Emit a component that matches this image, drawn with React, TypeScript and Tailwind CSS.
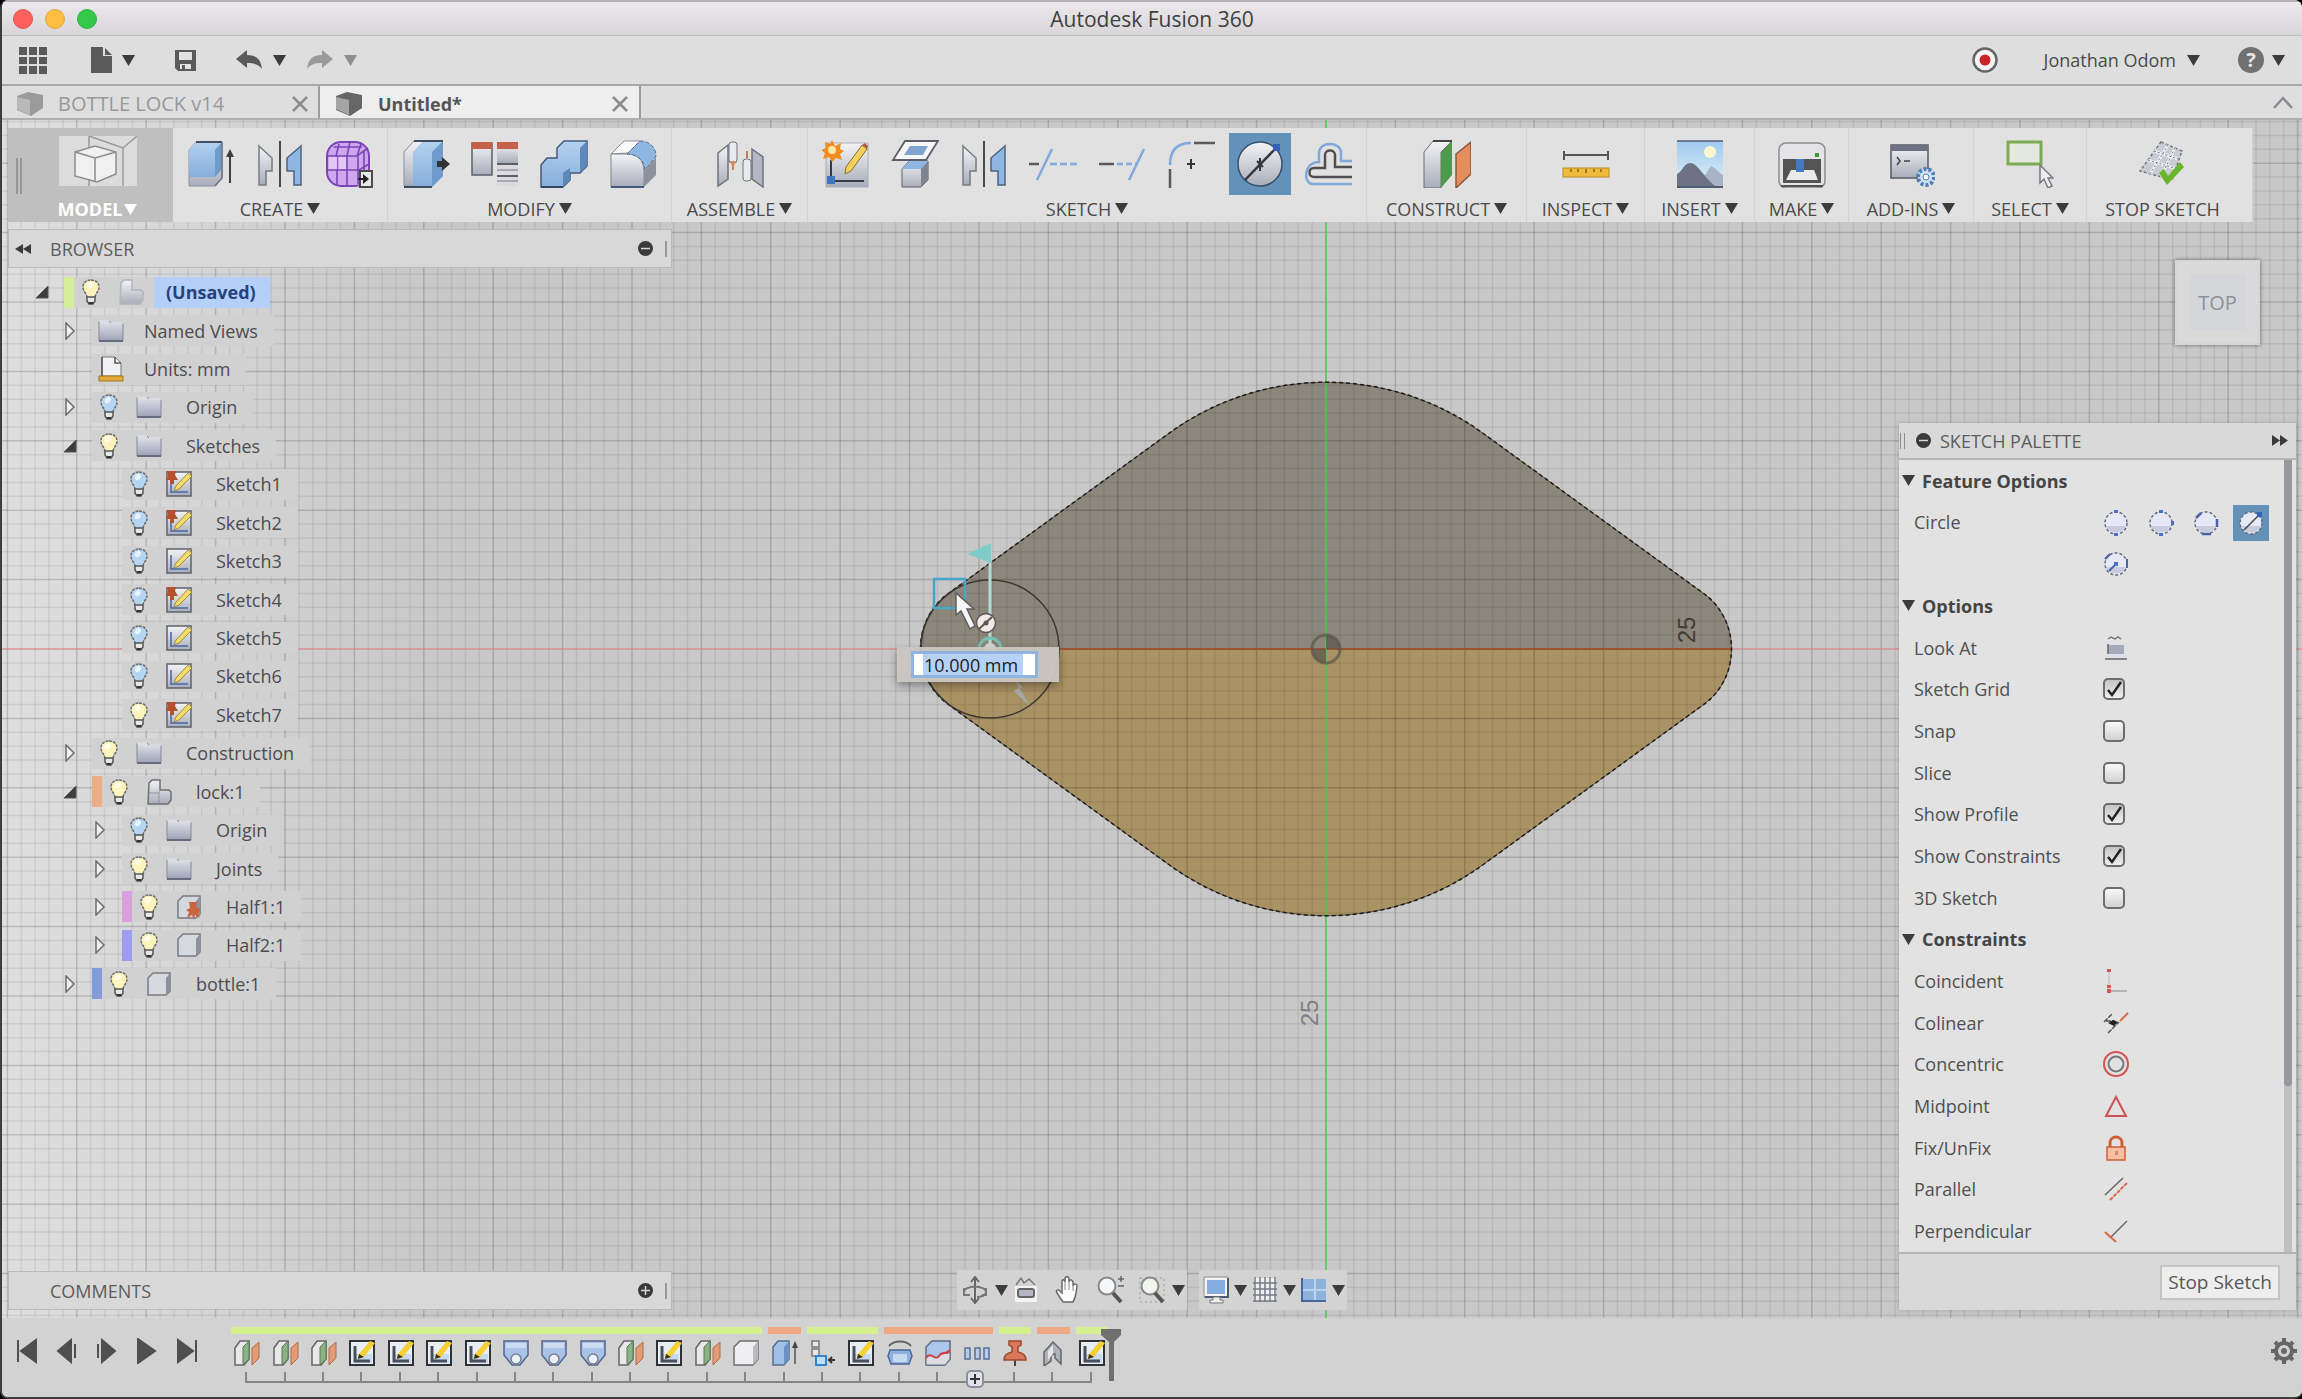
import type { ReactNode } from "react";

/* ---------- shared drawing helpers ---------- */

function Defs() {
  return (
    <svg aria-hidden="true" className="absolute size-0">
      <defs>
        <linearGradient id="blue" x1="0" y1="0" x2="0" y2="1">
          <stop offset="0" stopColor="#b4d2f0" />
          <stop offset="1" stopColor="#86aedb" />
        </linearGradient>
        <linearGradient id="steel" x1="0" y1="0" x2="0" y2="1">
          <stop offset="0" stopColor="#f4f4f7" />
          <stop offset="1" stopColor="#a9adb9" />
        </linearGradient>
        <linearGradient id="folder" x1="0" y1="0" x2="0" y2="1">
          <stop offset="0" stopColor="#e2e3ea" />
          <stop offset="1" stopColor="#9da2b6" />
        </linearGradient>
        <linearGradient id="sky" x1="0" y1="0" x2="0" y2="1">
          <stop offset="0" stopColor="#9fc9ee" />
          <stop offset="1" stopColor="#e3f1fa" />
        </linearGradient>
      </defs>
    </svg>
  );
}

function Svg({ box = "0 0 48 48", className, children }: { box?: string; className: string; children: ReactNode }) {
  return (
    <svg aria-hidden="true" viewBox={box} fill="none" className={`shrink-0 ${className}`}>
      {children}
    </svg>
  );
}

const Caret = ({ className = "text-[#3c3c3c]" }: { className?: string }) => (
  <Svg box="0 0 13 11" className={`h-[11px] w-[13px] ${className}`}>
    <path d="M0 0h13L6.500 11z" fill="currentColor" />
  </Svg>
);

/* ---------- ribbon icons (48 x 48) ---------- */

const Big = ({ children }: { children: ReactNode }) => <Svg className="size-12">{children}</Svg>;

const ExtrudeIcon = () => (
  <Big>
    <path d="M2 10l7-8h26v36l-7 8H2z" fill="url(#steel)" stroke="#8b8f9b" />
    <path d="M2 10l7-8h26v27l-7 8H2z" fill="url(#blue)" />
    <path d="M28 10l7-8v27l-7 8z" fill="#6f9bcc" />
    <path d="M9 2h26" stroke="#3f4d63" strokeWidth="2" />
    <path d="M28 46l7-8V2" stroke="#707583" strokeWidth="1.500" />
    <path d="M43 43V14" stroke="#3f3f3f" strokeWidth="2" />
    <path d="M43 9l-4 8h8z" fill="#3f3f3f" />
  </Big>
);

const MirrorIcon = () => (
  <Big>
    <path d="M3 6l13 12v13h-6v14H3z" fill="url(#steel)" stroke="#777b85" strokeWidth="1.500" />
    <path d="M45 6L31 18v13h7v14h7z" fill="#8fb6e2" stroke="#4e617c" strokeWidth="1.500" />
    <path d="M24 1v46" stroke="#4a4a4a" strokeWidth="2" />
  </Big>
);

const FormIcon = () => (
  <Big>
    <rect x="2" y="2" width="42" height="44" rx="14" fill="#cfa6f0" stroke="#7a45b3" strokeWidth="2" />
    <path d="M2 16h30l11-8M2 30h32l10-6M12 16v29M22 16v30M33 15v29M9 7h28M14 4l-3 12M25 2l-3 14M36 4l-4 12M39 10v32" stroke="#7a45b3" strokeWidth="1.600" />
    <path d="M4 17h8v12H4zM14 17h7v12h-7z" fill="#e2c8f8" />
    <rect x="35" y="31" width="12" height="16" fill="#e8e8e8" stroke="#4a4a4a" strokeWidth="2" />
    <path d="M33 39h6" stroke="#222" strokeWidth="2" />
    <path d="M38 34l6 5-6 5z" fill="#222" />
  </Big>
);

const PressPullIcon = () => (
  <Big>
    <path d="M2 12L12 1h10v36L14 46H2z" fill="url(#steel)" stroke="#8b8f9b" />
    <path d="M11 12L21 1h20v35l-11 11H11z" fill="url(#blue)" />
    <path d="M30 12L41 1v35L30 47z" fill="#6f9bcc" />
    <path d="M12 1h29M2 47h28" stroke="#3f4d63" strokeWidth="2" />
    <path d="M35 21h5v-4l8 7-8 7v-4h-5z" fill="#333" />
  </Big>
);

const PatternIcon = () => (
  <Big>
    <rect x="1" y="3" width="20" height="32" fill="url(#steel)" stroke="#5d6069" strokeWidth="1.500" />
    <rect x="1" y="2" width="20" height="7" fill="#c5614a" />
    <path d="M26 3h21v43H26z" fill="#d9d9de" />
    <path d="M26 3h21v20H26z" fill="url(#steel)" />
    <rect x="26" y="2" width="21" height="7" fill="#c5614a" />
    <path d="M26 24h21M26 36h21" stroke="#5d6069" strokeWidth="2" />
    <path d="M26 30h21M26 41h21" stroke="#a7a9b0" strokeWidth="2" />
  </Big>
);

const CombineIcon = () => (
  <Big>
    <path d="M17 8l7-7h23v25l-7 7H30v7l-7 7H1V25l6-7h10z" fill="url(#blue)" stroke="#44597a" strokeWidth="1.500" />
    <path d="M40 8l7-7v25l-7 7z" fill="#5c88bd" />
    <path d="M23 33l7-5v12l-7 7z" fill="#5c88bd" />
    <path d="M1 47h22" stroke="#34455f" strokeWidth="2" />
  </Big>
);

const FilletIcon = () => (
  <Big>
    <path d="M2 14L15 1h16l-12 12z" fill="#fafafa" stroke="#8b8f9b" />
    <path d="M2 14h16c10 0 17 6 17 17v16H2z" fill="url(#steel)" stroke="#7f838f" />
    <path d="M18 14L31 1c9 0 16 6 16 15L36 30c-1-10-8-16-18-16z" fill="#8fb6e2" stroke="#4e6788" strokeDasharray="4 2" />
    <path d="M35 31l12-14v18L35 47z" fill="#8d919d" />
    <path d="M2 47h33" stroke="#44597a" strokeWidth="2" />
  </Big>
);

const AssembleIcon = () => (
  <Big>
    <path d="M2 13l10-8v34L2 46z" fill="url(#steel)" stroke="#6f737e" strokeWidth="1.500" />
    <rect x="13" y="2" width="8" height="21" rx="3" fill="#e9eaee" stroke="#6f737e" />
    <path d="M36 9l11 8v30l-11-8z" fill="#b4b7c2" stroke="#6f737e" strokeWidth="1.500" />
    <rect x="27" y="19" width="8" height="22" rx="3" fill="#e9eaee" stroke="#6f737e" />
    <path d="M17 22v8M31 11v7" stroke="#c77b55" strokeWidth="2" />
    <path d="M14 21h6l-3 7z" fill="#d9895f" />
  </Big>
);

const NewSketchIcon = () => (
  <Big>
    <rect x="4" y="3" width="42" height="44" fill="url(#steel)" stroke="#a9acb6" />
    <path d="M9 20v21h33" stroke="#333a4a" strokeWidth="2" />
    <path d="M5 36h8v8H5z" fill="#3f73c4" />
    <path d="M24 27L40 5l5 4-16 22-6 3z" fill="#f2d25c" stroke="#8a6d2a" />
    <path d="M40 5l5 4 1-3-3-3z" fill="#a9613c" />
    <path d="M10 0l3 6 6-3-1 6 4 2-4 3 2 6-6-2-4 4-3-5-6 2 2-6-4-3 5-2-1-6 5 2z" fill="#f28c1e" />
    <circle cx="10" cy="10" r="4" fill="#ffe9a8" />
  </Big>
);

const ProjectIcon = () => (
  <Big>
    <path d="M14 1h33L35 20H2z" fill="#f6f6f8" stroke="#5b5f69" strokeWidth="1.800" />
    <path d="M19 6h18l-5 9H13z" fill="#7fa4cf" />
    <path d="M11 29l7-8h19v19l-7 7H11z" fill="url(#steel)" stroke="#5b5f69" />
    <path d="M11 29l7-8h19l-7 8z" fill="#8fb6e2" />
    <path d="M30 29l7-8v19l-7 7z" fill="#80848f" />
  </Big>
);

const TrimIcon = () => (
  <Big>
    <path d="M0 24h10" stroke="#5a5a5a" strokeWidth="2.500" />
    <path d="M8 40L23 9" stroke="#7fa8dc" strokeWidth="2.500" />
    <path d="M21 24h27" stroke="#7fa8dc" strokeWidth="2.500" strokeDasharray="7 3" />
  </Big>
);

const ExtendIcon = () => (
  <Big>
    <path d="M1 24h15" stroke="#5a5a5a" strokeWidth="2.500" />
    <path d="M31 40L46 9" stroke="#7fa8dc" strokeWidth="2.500" />
    <path d="M19 24h19" stroke="#7fa8dc" strokeWidth="2.500" strokeDasharray="6 3" />
  </Big>
);

const SketchFilletIcon = () => (
  <Big>
    <path d="M3 25C3 10 10 3 24 3" stroke="#7fa8dc" strokeWidth="2.500" />
    <path d="M27 3h21M3 29v20" stroke="#5a5a5a" strokeWidth="2.500" />
    <path d="M24 19v10M20 24h8" stroke="#333" strokeWidth="2" />
  </Big>
);

const DiameterCircleIcon = () => (
  <Big>
    <circle cx="24" cy="24" r="22" fill="url(#steel)" stroke="#37506c" strokeWidth="1.500" />
    <path d="M9 40L40 8" stroke="#33373f" strokeWidth="2.500" />
    <path d="M24 18v13M21 21l6 6" stroke="#33373f" strokeWidth="2" />
    <path d="M37 4h7v7h-7z" fill="#2f62b8" />
  </Big>
);

const OffsetIcon = () => (
  <Big>
    <path d="M47 21H36V13c0-12-22-12-22 0v9C-2 22-2 44 8 44h39" stroke="#7fa8dc" strokeWidth="2.500" />
    <path d="M47 27H30V15c0-6-10-6-10 0v13H9c-6 0-6 9 0 9h38" stroke="#4f4f4f" strokeWidth="2.500" />
  </Big>
);

const ConstructIcon = () => (
  <Big>
    <path d="M1 12L10 1h19L18 12v36H1z" fill="url(#steel)" stroke="#6a6e78" />
    <path d="M18 12L29 1v34L18 48z" fill="#4f9a4a" />
    <path d="M10 1h19" stroke="#444" strokeWidth="2" />
    <path d="M33 14L48 2v32L33 48z" fill="#e58e5d" stroke="#8a5a3e" strokeWidth="1.500" />
  </Big>
);

const InspectIcon = () => (
  <Big>
    <path d="M2 15h44M2 11v9M46 11v9" stroke="#555" strokeWidth="2" />
    <rect x="1" y="28" width="46" height="9" fill="#f0bb3c" stroke="#b98a25" />
    <path d="M9 29v3M16 29v3M24 29v4M32 29v3M39 29v3" stroke="#8a6414" strokeWidth="1.500" />
  </Big>
);

const InsertIcon = () => (
  <Big>
    <rect x="1" y="1" width="46" height="46" fill="url(#sky)" />
    <circle cx="34" cy="12" r="6" fill="#fdf6cf" />
    <path d="M1 35c5-2 7-12 14-12 6 0 9 10 14 12l6-9c5 2 8 7 12 9v12H1z" fill="#a8b4c6" />
    <path d="M1 34c5-2 7-11 13-11 8 0 16 18 27 24H1z" fill="#6d7385" />
    <path d="M1 1h46" stroke="#4f5d72" strokeWidth="1.500" />
    <path d="M1 47h46" stroke="#4f5d72" strokeWidth="2" />
  </Big>
);

const MakeIcon = () => (
  <Big>
    <rect x="1" y="3" width="46" height="45" rx="7" fill="#e4e4e6" stroke="#8c8c8c" strokeWidth="1.500" />
    <rect x="5" y="19" width="38" height="24" fill="#555" />
    <path d="M13 30h23l4 10H8z" fill="#e9e9ec" />
    <rect x="18" y="19" width="8" height="13" fill="#4479c4" />
    <path d="M37 13h4v4h-4z" fill="#3a9a3a" />
    <path d="M3 46h42" stroke="#555" strokeWidth="2" />
  </Big>
);

const AddInsIcon = () => (
  <Big>
    <rect x="4" y="5" width="37" height="33" fill="url(#steel)" stroke="#555a66" strokeWidth="1.500" />
    <path d="M4 5h37v6H4z" fill="#6c7283" />
    <path d="M10 17l3 4-3 4M17 21h6" stroke="#444" strokeWidth="1.500" />
    <circle cx="39" cy="37" r="8" fill="#cfe2f7" stroke="#4f7fb9" strokeWidth="4" strokeDasharray="3 2" />
    <circle cx="39" cy="37" r="3" fill="#fff" stroke="#4f7fb9" />
  </Big>
);

const SelectIcon = () => (
  <Big>
    <rect x="2" y="2" width="33" height="22" fill="#e4e8df" stroke="#7cab52" strokeWidth="3" />
    <path d="M34 25v18l4-4 4 9 4-2-4-8h5z" fill="#eee" stroke="#77797f" strokeWidth="1.500" />
  </Big>
);

const StopSketchIcon = () => (
  <Big>
    <path d="M22 2l21 9-10 29L1 31z" fill="#c9ccd6" stroke="#73777f" strokeWidth="1.500" strokeDasharray="3 2" />
    <path d="M15 11l24 8M9 20l26 8M29 5L11 34M36 8L22 37" stroke="#f3f3f5" strokeWidth="2.500" />
    <path d="M15 11l24 8M9 20l26 8M29 5L11 34M36 8L22 37" stroke="#73777f" strokeDasharray="2 2" />
    <path d="M20 33l5-4 4 7 12-14 4 5-17 18z" fill="#6bb52b" />
  </Big>
);

const ModelIcon = () => (
  <Svg box="0 0 78 50" className="h-[50px] w-[78px]">
    <path d="M0 0h78v50H0z" fill="#dcdcdc" />
    <path d="M30 0v50M30 0l34 12 14-12M64 12v38" stroke="#9a9a9a" strokeWidth="1.500" />
    <path d="M16 16l20-6 21 6v22l-19 8-22-6z" fill="#f0f0f0" stroke="#8d8d8d" strokeWidth="1.500" />
    <path d="M16 16l20 6 21-6M36 22v24" stroke="#8d8d8d" strokeWidth="1.500" />
  </Svg>
);

/* ---------- ribbon ---------- */

type Tool = { name: string; icon: ReactNode; on?: boolean };
type Group = { label: string; width: string; tools: Tool[]; menu?: boolean };

const groups: Group[] = [
  { label: "CREATE", width: "w-[215px]", menu: true, tools: [
    { name: "Extrude", icon: <ExtrudeIcon /> },
    { name: "Mirror", icon: <MirrorIcon /> },
    { name: "Create Form", icon: <FormIcon /> },
  ] },
  { label: "MODIFY", width: "w-[284px]", menu: true, tools: [
    { name: "Press Pull", icon: <PressPullIcon /> },
    { name: "Align", icon: <PatternIcon /> },
    { name: "Combine", icon: <CombineIcon /> },
    { name: "Fillet", icon: <FilletIcon /> },
  ] },
  { label: "ASSEMBLE", width: "w-[136px]", menu: true, tools: [{ name: "Joint", icon: <AssembleIcon /> }] },
  { label: "SKETCH", width: "w-[559px]", menu: true, tools: [
    { name: "Create Sketch", icon: <NewSketchIcon /> },
    { name: "Project", icon: <ProjectIcon /> },
    { name: "Mirror Sketch", icon: <MirrorIcon /> },
    { name: "Trim", icon: <TrimIcon /> },
    { name: "Extend", icon: <ExtendIcon /> },
    { name: "Sketch Fillet", icon: <SketchFilletIcon /> },
    { name: "Diameter Circle", icon: <DiameterCircleIcon />, on: true },
    { name: "Offset", icon: <OffsetIcon /> },
  ] },
  { label: "CONSTRUCT", width: "w-[160px]", menu: true, tools: [{ name: "Offset Plane", icon: <ConstructIcon /> }] },
  { label: "INSPECT", width: "w-[118px]", menu: true, tools: [{ name: "Measure", icon: <InspectIcon /> }] },
  { label: "INSERT", width: "w-[110px]", menu: true, tools: [{ name: "Attach Canvas", icon: <InsertIcon /> }] },
  { label: "MAKE", width: "w-[94px]", menu: true, tools: [{ name: "3D Print", icon: <MakeIcon /> }] },
  { label: "ADD-INS", width: "w-[125px]", menu: true, tools: [{ name: "Scripts", icon: <AddInsIcon /> }] },
  { label: "SELECT", width: "w-[113px]", menu: true, tools: [{ name: "Window Select", icon: <SelectIcon /> }] },
  { label: "STOP SKETCH", width: "w-[166px] pr-[14px]", tools: [{ name: "Finish Sketch", icon: <StopSketchIcon /> }] },
];

function Ribbon() {
  return (
    <div className="flex h-[94px] self-start bg-[#e1e1e1]">
      <button type="button" className="relative flex w-[165px] flex-col items-center bg-[#bfbfbf] pl-[14px] pt-2 font-bold text-white">
        <span className="absolute left-2 top-[30px] h-9 w-[6px] border-x-2 border-[#969696]" />
        <ModelIcon />
        <span className="flex h-9 items-center gap-[2px] pt-[10px]">MODEL <Caret className="text-white" /></span>
      </button>
      {groups.map((g) => (
        <div key={g.label} className={`flex flex-col items-center border-r border-[#d3d3d3] pt-[5px] ${g.width}`}>
          <div className="flex gap-[7px]">
            {g.tools.map((t) => (
              <button key={t.name} type="button" aria-label={t.name} aria-pressed={t.on}
                className={`flex size-[62px] items-center justify-center ${t.on ? "bg-[#6491b7]" : ""}`}>
                {t.icon}
              </button>
            ))}
          </div>
          <button type="button" className="flex h-[27px] items-center gap-1 whitespace-nowrap">
            {g.label}{g.menu && <Caret />}
          </button>
        </div>
      ))}
    </div>
  );
}

/* ---------- window bars ---------- */

function TitleBar() {
  return (
    <header className="relative flex h-9 items-center justify-center border-b border-t-2 border-b-[#bdbabd] border-t-[#b4b2b4] bg-linear-to-b from-[#ece9ec] to-[#d9d6d9]">
      <div className="absolute left-[11px] flex gap-3">
        <button type="button" aria-label="Close" className="size-5 rounded-full border border-[#e2544f] bg-[#fc615d]" />
        <button type="button" aria-label="Minimize" className="size-5 rounded-full border border-[#e0a83c] bg-[#fdbe41]" />
        <button type="button" aria-label="Zoom" className="size-5 rounded-full border border-[#2fb344] bg-[#34c84a]" />
      </div>
      <h1 className="text-[21px] text-[#404040]">Autodesk Fusion 360</h1>
    </header>
  );
}

function QuickBar() {
  return (
    <div className="flex h-[50px] items-center border-b-2 border-[#a8a8a8] bg-[#dedede] px-[17px] text-[#5a5a5a]">
      <button type="button" aria-label="Data panel">
        <Svg box="0 0 28 28" className="size-7">
          <path d="M0 1h8v8H0zM10 1h8v8h-8zM20 1h8v8h-8zM0 11h8v7H0zM10 11h8v7h-8zM20 11h8v7h-8zM0 20h8v8H0zM10 20h8v8h-8zM20 20h8v8h-8z" fill="currentColor" />
        </Svg>
      </button>
      <button type="button" aria-label="File" className="ml-11 flex items-center gap-[10px]">
        <Svg box="0 0 21 26" className="h-[26px] w-[21px]">
          <path d="M0 0h12v9h9v17H0z" fill="currentColor" />
          <path d="M14 1l7 7h-7z" fill="currentColor" />
        </Svg>
        <Caret />
      </button>
      <button type="button" aria-label="Save" className="ml-10">
        <Svg box="0 0 21 21" className="size-[21px]">
          <path d="M0 0h21v21H3l-3-3z" fill="currentColor" />
          <path d="M4 2h13v8H4zM5 14h11v5H5z" fill="#e2e2e2" />
          <path d="M7 15h3v4H7z" fill="currentColor" />
        </Svg>
      </button>
      <button type="button" aria-label="Undo" className="ml-10 flex items-center gap-[11px]">
        <Svg box="0 0 26 20" className="h-5 w-[26px]">
          <path d="M0 9L11 0v5c9 0 14 4 15 14-4-5-8-6-15-6v5z" fill="currentColor" />
        </Svg>
        <Caret />
      </button>
      <button type="button" aria-label="Redo" className="ml-[21px] flex items-center gap-[11px] text-[#9a9a9a]">
        <Svg box="0 0 26 20" className="h-5 w-[26px]">
          <path d="M26 9L15 0v5C6 5 1 9 0 19c4-5 8-6 15-6v5z" fill="currentColor" />
        </Svg>
        <Caret className="text-[#8f8f8f]" />
      </button>
      <button type="button" aria-label="Record" className="ml-auto">
        <Svg box="0 0 26 26" className="size-[26px]">
          <circle cx="13" cy="13" r="11.500" fill="#f4f4f4" stroke="#666" strokeWidth="2.500" />
          <circle cx="13" cy="13" r="5.500" fill="#cb2427" />
        </Svg>
      </button>
      <button type="button" className="ml-[46px] flex items-center gap-[11px] text-[#4c4c4c]">Jonathan Odom <Caret /></button>
      <button type="button" aria-label="Help" className="ml-[38px] flex items-center gap-2">
        <span className="flex size-[26px] items-center justify-center rounded-full bg-[#717171] text-xl font-bold text-[#e6e6e6]">?</span>
        <Caret />
      </button>
    </div>
  );
}

const TabCube = ({ front, side }: { front: string; side: string }) => (
  <Svg box="0 0 26 24" className="h-6 w-[26px]">
    <path d="M0 4l11-4 15 3v13l-12 8L0 18z" fill={side} />
    <path d="M0 5l13 3v15L0 17z" fill={front} />
  </Svg>
);

const Cross = () => (
  <Svg box="0 0 16 16" className="size-4"><path d="M1 1l14 14M15 1L1 15" stroke="#8b8b93" strokeWidth="2.500" /></Svg>
);

function Tabs() {
  return (
    <nav className="flex h-[34px] items-stretch border-b-2 border-[#b0b0b0] bg-[#dedede]">
      <div className="flex w-[318px] items-center border-r-2 border-[#9d9d9d] pl-[15px] pr-[10px] pt-[3px] text-[#999]">
        <TabCube front="#b9b9b9" side="#9b9b9b" />
        <a href="#bottle" className="ml-[15px] mr-auto text-xl leading-6">BOTTLE LOCK v14</a>
        <button type="button" aria-label="Close BOTTLE LOCK v14"><Cross /></button>
      </div>
      <div className="flex w-[321px] items-center border-r-2 border-[#9d9d9d] bg-[#eee] pl-4 pr-[11px] pt-[3px] font-bold text-[#555]">
        <TabCube front="#a5a5a5" side="#666" />
        <a href="#untitled" className="ml-4 mr-auto">Untitled*</a>
        <button type="button" aria-label="Close Untitled"><Cross /></button>
      </div>
      <button type="button" aria-label="Collapse" className="ml-auto mr-[9px]">
        <Svg box="0 0 20 13" className="h-[13px] w-5"><path d="M1 12l9-10 9 10" stroke="#8b8b93" strokeWidth="2.500" /></Svg>
      </button>
    </nav>
  );
}

/* ---------- browser tree ---------- */

const Bulb = ({ lit }: { lit?: boolean }) => (
  <Svg box="0 0 18 26" className="h-[26px] w-[18px]">
    <path d="M9 1c5 0 8 3 8 7 0 5-4 6-4 11H5c0-5-4-6-4-11 0-4 3-7 8-7z" fill={lit ? "#fdf3bd" : "#b5d5f3"} stroke="#6f6f6f" strokeWidth="1.500" strokeDasharray="3 1" />
    <path d="M6 4c2-2 5-1 5 1 0 3-3 5-5 4-2-1-2-3 0-5z" fill="#fff" fillOpacity=".7" />
    <path d="M5 18h8v4l-2 3H7l-2-3z" fill="#e8e8e8" stroke="#555" strokeWidth="1.500" />
    <path d="M7 24h4" stroke="#333" strokeWidth="2" />
  </Svg>
);

const Small = ({ children }: { children: ReactNode }) => <Svg box="0 0 26 26" className="size-[26px]">{children}</Svg>;

const FolderIcon = () => (
  <Small>
    <path d="M1 3h10l2 2h12v18H1z" fill="url(#folder)" stroke="#85899a" />
    <path d="M1 3h10M13 5h12" stroke="#e9e9ee" strokeWidth="1.500" />
    <path d="M1 23h24" stroke="#666b80" strokeWidth="2" />
  </Small>
);

const UnitsIcon = () => (
  <Small>
    <path d="M4 1h13l6 6v13H4z" fill="#f2f2f5" stroke="#777" />
    <path d="M4 1v19M17 1v6h6" stroke="#555" strokeWidth="1.500" />
    <path d="M1 20h24v5H1z" fill="#e3a93a" stroke="#a57420" />
  </Small>
);

const SketchIcon = ({ pinned }: { pinned?: boolean }) => (
  <Small>
    <path d="M1 1h24v24H1z" fill="url(#steel)" stroke="#5d616b" strokeWidth="1.500" />
    <path d="M5 7v14h17" stroke="#4468a5" strokeWidth="1.500" />
    <path d="M10 15L22 2l4 3-13 13-5 2z" fill="#f4dc6a" stroke="#a58a3a" />
    {pinned && <path d="M1 0h9L9 4l3 5H8v4H4V9H0l2-5z" fill="#b4502c" />}
  </Small>
);

const ComponentIcon = ({ pale }: { pale?: boolean }) => (
  <Small>
    <path d="M3 4l3-3h8v10h9l2 2v8l-3 4H2z" fill="url(#steel)" stroke={pale ? "#b3b5bd" : "#6c707b"} strokeWidth="1.500" />
    {!pale && <path d="M13 12v13M3 14h10" stroke="#8e929e" />}
  </Small>
);

const BodyIcon = ({ pinned }: { pinned?: boolean }) => (
  <Small>
    <path d="M2 7l5-5h17v18l-4 4H2z" fill="#d6d8e0" stroke="#777b86" strokeWidth="1.500" />
    <path d="M20 7l4-5v18l-4 4z" fill="#8d919d" />
    {pinned && <path d="M13 8h8l-1 5 5 3-3 3 2 5-5-3-1 5-2-5-5 3 2-6-3-2 4-2z" fill="#c8653f" />}
  </Small>
);

type Row = {
  label: string; level: 0 | 1 | 2; toggle?: "open" | "closed"; bar?: string; lit?: boolean; bulb?: boolean; icon: ReactNode; root?: boolean;
};

const rows: Row[] = [
  { label: "(Unsaved)", level: 0, toggle: "open", bar: "bg-[#d5ee9a]", bulb: true, lit: true, icon: <ComponentIcon pale />, root: true },
  { label: "Named Views", level: 1, toggle: "closed", icon: <FolderIcon /> },
  { label: "Units: mm", level: 1, icon: <UnitsIcon /> },
  { label: "Origin", level: 1, toggle: "closed", bulb: true, icon: <FolderIcon /> },
  { label: "Sketches", level: 1, toggle: "open", bulb: true, lit: true, icon: <FolderIcon /> },
  { label: "Sketch1", level: 2, bulb: true, icon: <SketchIcon pinned /> },
  { label: "Sketch2", level: 2, bulb: true, icon: <SketchIcon pinned /> },
  { label: "Sketch3", level: 2, bulb: true, icon: <SketchIcon /> },
  { label: "Sketch4", level: 2, bulb: true, icon: <SketchIcon pinned /> },
  { label: "Sketch5", level: 2, bulb: true, icon: <SketchIcon /> },
  { label: "Sketch6", level: 2, bulb: true, icon: <SketchIcon /> },
  { label: "Sketch7", level: 2, bulb: true, lit: true, icon: <SketchIcon pinned /> },
  { label: "Construction", level: 1, toggle: "closed", bulb: true, lit: true, icon: <FolderIcon /> },
  { label: "lock:1", level: 1, toggle: "open", bar: "bg-[#ecae87]", bulb: true, lit: true, icon: <ComponentIcon /> },
  { label: "Origin", level: 2, toggle: "closed", bulb: true, icon: <FolderIcon /> },
  { label: "Joints", level: 2, toggle: "closed", bulb: true, lit: true, icon: <FolderIcon /> },
  { label: "Half1:1", level: 2, toggle: "closed", bar: "bg-[#daa0dd]", bulb: true, lit: true, icon: <BodyIcon pinned /> },
  { label: "Half2:1", level: 2, toggle: "closed", bar: "bg-[#9c9cf0]", bulb: true, lit: true, icon: <BodyIcon /> },
  { label: "bottle:1", level: 1, toggle: "closed", bar: "bg-[#829bd9]", bulb: true, lit: true, icon: <BodyIcon /> },
];

const indent = { 0: "pl-3", 1: "pl-10", 2: "pl-[70px]" };

function Tree() {
  return (
    <ul className="mt-[5px] grid h-[730px] auto-rows-fr items-center">
      {rows.map((r, i) => (
        <li key={i} className={`flex h-[31px] items-center ${indent[r.level]}`}>
          <span className="flex w-11 justify-center">
            {r.toggle && (
              <button type="button" aria-label={`Toggle ${r.label}`}>
                <Svg box="0 0 14 18" className="h-[18px] w-[14px]">
                  {r.toggle === "open"
                    ? <path d="M13 3v12H1z" fill="#3c3c3c" stroke="#555" />
                    : <path d="M3 1v16l8-8z" fill="#efefef" stroke="#6d6d6d" strokeWidth="1.500" />}
                </Svg>
              </button>
            )}
          </span>
          <span className="flex h-full items-center bg-[#d1d1d1]">
            {r.bar && <span className={`h-full w-[10px] ${r.bar}`} />}
            {r.bulb && (
              <button type="button" aria-label={`Show ${r.label}`} className="flex w-[34px] justify-center"><Bulb lit={r.lit} /></button>
            )}
            <span className={`flex justify-center ${r.bulb ? "w-[46px]" : "w-[38px]"}`}>{r.icon}</span>
            <span className={r.root
              ? "flex h-full items-center bg-[#b4d0f8] pl-3 pr-[14px] font-bold text-[#26427c]"
              : "pl-[14px] pr-4 text-[#4c4c50]"}>
              {r.label}
            </span>
          </span>
        </li>
      ))}
    </ul>
  );
}

const RoundSign = ({ plus }: { plus?: boolean }) => (
  <Svg box="0 0 15 15" className="size-[15px]">
    <circle cx="7.500" cy="7.500" r="7.500" fill="#3a3a3a" />
    <path d={plus ? "M3 7.500h9M7.500 3v9" : "M3 7.500h9"} stroke="#d7d7d7" strokeWidth="1.500" />
  </Svg>
);

function PanelBar({ title, back, plus }: { title: string; back?: boolean; plus?: boolean }) {
  return (
    <div className="flex h-[39px] items-center border border-[#b9b9b9] bg-[#d8d8d8] pr-1 text-[#5c5c5c]">
      <span className="flex w-[41px] pl-[6px]">
        {back && (
          <button type="button" aria-label="Collapse browser">
            <Svg box="0 0 16 10" className="h-[10px] w-4"><path d="M8 0v10L0 5zM16 0v10L8 5z" fill="#3a3a3a" /></Svg>
          </button>
        )}
      </span>
      <h2>{title}</h2>
      <button type="button" aria-label={`Toggle ${title}`} className="ml-auto mr-3"><RoundSign plus={plus} /></button>
      <span className="h-4 w-[2px] bg-[#9a9a9a]" />
    </div>
  );
}

/* ---------- viewport drawing ---------- */

const PITCH = 13.88;
const steps = Array.from({ length: 241 }, (_, i) => i - 120).filter((n) => n !== 0);
const OUTLINE =
  "M-405.500 0C-405.500-24-394-44-377-56L-158-215A267 267 0 0 1 158-215L377-56C394-44 405.500-24 405.500 0C405.500 24 394 44 377 56L158 215A267 267 0 0 1-158 215L-377 56C-394 44-405.500 24-405.500 0z";

function Scene() {
  return (
    <svg className="absolute inset-0 size-full" role="img" aria-label="Sketch plane">
      <svg x="50%" y="0" overflow="visible" fill="none">
        <g transform="translate(174 529)">
          <path d="M-405.500 0C-405.500-24-394-44-377-56L-158-215A267 267 0 0 1 158-215L377-56C394-44 405.500-24 405.500 0z" fill="#8d867b" />
          <path d="M-405.500 0C-405.500 24-394 44-377 56L-158 215A267 267 0 0 0 158 215L377 56C394 44 405.500 24 405.500 0z" fill="#a99264" />
          {steps.map((n) => {
            const p = n * PITCH;
            const tone = n % 5 === 0 ? 0.16 : 0.07;
            return (
              <g key={n} stroke="#000" strokeOpacity={tone} strokeWidth="1.500">
                <path d={`M${p}-600V900`} />
                <path d={`M-1700 ${p}H1700`} />
              </g>
            );
          })}
          <path d="M-1700 0H1700" stroke="#d98080" strokeOpacity=".6" strokeWidth="2" />
          <path d="M-268 0H405" stroke="#9c5330" strokeWidth="2" />
          <path d="M0-600V900" stroke="#55c055" strokeOpacity=".75" strokeWidth="2" />
          <path d={OUTLINE} stroke="#5a534a" />
          <path d={OUTLINE} stroke="#1f1c19" strokeWidth="1.500" strokeDasharray="4 3" />
          <circle cx="0" cy="0" r="14" stroke="#5d564b" strokeOpacity=".7" strokeWidth="3" />
          <path d="M0 0V-14A14 14 0 0 1 14 0zM0 0V14A14 14 0 0 1-14 0z" fill="#5d564b" fillOpacity=".75" />
          <circle cx="-336" cy="0" r="69" stroke="#3b3733" strokeWidth="1.500" />
          <path d="M-336-100V-6" stroke="#b6dada" strokeWidth="3" />
          <path d="M-359-95l24-11v20z" fill="#7fccc8" />
          <rect x="-392" y="-70" width="31" height="29" stroke="#4aa5cb" strokeWidth="2.500" />
          <circle cx="-336" cy="0" r="11" stroke="#74bfb2" strokeWidth="3" />
          <circle cx="-336" cy="0" r="6" fill="#d4dcda" />
          <path d="M-370-56v22l5-4 9 18 5-3-8-17h7z" fill="#f6f6f6" stroke="#5e5e5e" strokeWidth="1.500" />
          <circle cx="-340" cy="-26" r="9.500" fill="#efeaea" stroke="#5e5454" strokeWidth="1.500" />
          <path d="M-347-20l13-12" stroke="#5e5454" strokeWidth="2" />
          <circle cx="-340" cy="-26" r="2.500" fill="#5e5454" />
          <path d="M-312 30l15 26-15-14 8-4z" fill="#a9a7a4" stroke="#a9a7a4" />
          <g fontFamily="Liberation Sans, sans-serif" fontSize="24" textAnchor="middle">
            <text transform="translate(369 -19) rotate(-90)" fill="#3f3b37">25</text>
            <text transform="translate(-8 364) rotate(-90)" fill="#808080">25</text>
          </g>
        </g>
      </svg>
    </svg>
  );
}

/* ---------- sketch palette ---------- */

const Check = ({ label, on }: { label: string; on?: boolean }) => (
  <label className="flex items-center pl-[15px]">
    <span className="w-[184px] whitespace-nowrap">{label}</span>
    <span className="relative ml-[5px] size-[22px]">
      <input type="checkbox" defaultChecked={on}
        className="peer block size-[22px] appearance-none rounded-[5px] border-2 border-[#6d6d6d] bg-linear-to-b from-[#f8f8f8] to-[#d2d2d2] checked:from-[#c4c4c4] checked:to-[#efefef]" />
      <svg aria-hidden="true" viewBox="0 0 22 22" fill="none" className="pointer-events-none absolute inset-0 hidden size-[22px] peer-checked:block">
        <path d="M5 12l4 5 9-13" stroke="#222" strokeWidth="2.500" />
      </svg>
    </span>
  </label>
);

const Action = ({ label, children }: { label: string; children: ReactNode }) => (
  <div className="flex items-center pl-[15px]">
    <span className="w-[184px]">{label}</span>
    <button type="button" aria-label={label} className="flex w-9 justify-center">{children}</button>
  </div>
);

const Section = ({ label }: { label: string }) => (
  <button type="button" className="flex items-center gap-[7px] pl-[3px] font-bold text-[#454545]"><Caret />{label}</button>
);

const CircleGlyph = ({ kind }: { kind: number }) => (
  <Small>
    <circle cx="13" cy="13" r="11" fill="#e6e9f5" stroke="#666d80" strokeWidth="1.500" strokeDasharray="3 2" />
    <path d="M3 16a11 11 0 0 0 20 0z" fill="#b9bed3" fillOpacity=".7" />
    {kind === 0 && <path d="M11 0h4v3h-4zM11 23h4v3h-4z" fill="#4a72c8" />}
    {kind === 1 && <path d="M11 0h4v3h-4zM11 23h4v3h-4zM23 11h3v4h-3z" fill="#4a72c8" />}
    {kind === 2 && <path d="M3 8L8 3M24 9v8M9 24h9" stroke="#4a62a8" strokeWidth="2.500" />}
    {kind === 3 && <><path d="M6 20L21 5" stroke="#444" strokeWidth="1.500" /><path d="M19 2h5v5h-5z" fill="#2f62b8" /></>}
    {kind === 4 && <><path d="M6 20l7-7" stroke="#4a62a8" strokeWidth="2" /><path d="M11 11h4v4h-4z" fill="#4a72c8" /><path d="M2 8L7 3M24 8v9" stroke="#4a62a8" strokeWidth="2" /></>}
  </Small>
);

const kinds = ["Center diameter circle", "2-point circle", "3-point circle", "2-tangent circle", "3-tangent circle"];

function Palette() {
  return (
    <aside className="mt-[78px] flex w-[397px] flex-1 flex-col bg-[#e2e2e2] shadow-[0_0_4px_rgba(0,0,0,0.2)]">
      <div className="flex h-[37px] items-center border-b-2 border-[#b4b4b4] bg-[#d9d9d9] pl-[1px] pr-2 text-[#5c5c5c]">
        <span className="h-4 w-[5px] border-x border-[#8f8f8f]" />
        <button type="button" aria-label="Collapse palette" className="ml-[11px] mr-[9px]"><RoundSign /></button>
        <h2>SKETCH PALETTE</h2>
        <button type="button" aria-label="Dock palette" className="ml-auto">
          <Svg box="0 0 16 11" className="h-[11px] w-4"><path d="M0 0v11l8-5.500zM8 0v11l8-5.500z" fill="#3a3a3a" /></Svg>
        </button>
      </div>
      <div className="flex flex-1 pr-1">
        <div className="grid flex-1 auto-rows-fr text-[#505050]">
          <Section label="Feature Options" />
          <div className="row-span-2 flex pl-[15px]">
            <span className="mt-2 w-[184px]">Circle</span>
            <div className="grid grid-cols-4 grid-rows-2 items-center gap-x-[9px]">
              {kinds.map((k, i) => (
                <button key={k} type="button" aria-label={k} className={`flex size-9 items-center justify-center ${i === 3 ? "bg-[#6491b7]" : ""}`}>
                  <CircleGlyph kind={i} />
                </button>
              ))}
            </div>
          </div>
          <Section label="Options" />
          <Action label="Look At">
            <Small>
              <path d="M5 4l3-2 4 2 3-2 3 2" stroke="#777" strokeWidth="1.500" />
              <path d="M2 8h22v15H2z" fill="#dfe1ea" />
              <path d="M5 10h16v9H5z" fill="#a4a9bb" />
              <path d="M2 24h22M5 9v10" stroke="#666" strokeWidth="1.500" />
            </Small>
          </Action>
          <Check label="Sketch Grid" on />
          <Check label="Snap" />
          <Check label="Slice" />
          <Check label="Show Profile" on />
          <Check label="Show Constraints" on />
          <Check label="3D Sketch" />
          <Section label="Constraints" />
          <Action label="Coincident">
            <Small>
              <path d="M6 3v19" stroke="#c9c4c4" strokeWidth="1.500" />
              <path d="M6 23h18" stroke="#a5a5a5" strokeWidth="1.500" />
              <path d="M4 1h4v3H4zM4 17h4v3H4zM4 21h4v4H4z" fill="#cf5a4d" />
            </Small>
          </Action>
          <Action label="Colinear">
            <Small>
              <path d="M1 12l8-8M3 11h9M5 23l11-11" stroke="#555" strokeWidth="1.500" strokeDasharray="5 1" />
              <path d="M17 11l8-8" stroke="#dd6a4a" strokeWidth="2" />
              <path d="M5 13l5-3 5 2-4 4z" fill="#222" />
            </Small>
          </Action>
          <Action label="Concentric">
            <Small>
              <circle cx="13" cy="13" r="12" stroke="#d64e4e" strokeWidth="2" />
              <circle cx="13" cy="13" r="7.500" stroke="#777" strokeWidth="2" />
            </Small>
          </Action>
          <Action label="Midpoint">
            <Small><path d="M13 4l10 19H3z" stroke="#d05050" strokeWidth="2" /></Small>
          </Action>
          <Action label="Fix/UnFix">
            <Small>
              <path d="M7 12V8c0-8 12-8 12 0v4" stroke="#cf5e33" strokeWidth="3" />
              <path d="M4 12h18v13H4z" fill="#f4bfa2" stroke="#cf5e33" strokeWidth="1.500" />
              <path d="M12 16h3v4h-3z" fill="#cf8e73" />
            </Small>
          </Action>
          <Action label="Parallel">
            <Small>
              <path d="M2 19L20 2" stroke="#666" strokeWidth="1.500" />
              <path d="M7 24L24 7" stroke="#d9694a" strokeWidth="2" strokeDasharray="4 1" />
            </Small>
          </Action>
          <Action label="Perpendicular">
            <Small>
              <path d="M8 19L24 3" stroke="#666" strokeWidth="1.500" />
              <path d="M2 14l11 10" stroke="#d9694a" strokeWidth="2" />
            </Small>
          </Action>
        </div>
        <div className="w-2 bg-[#bfbfc2]"><div className="h-[79%] rounded-b bg-[#98989c]" /></div>
      </div>
      <div className="flex h-[58px] items-center justify-end border-t-2 border-[#b4b4b4] bg-[#d9d9d9] pr-4">
        <button type="button" className="h-[35px] border-2 border-[#c4c4c4] bg-[#ededed] px-[6px] text-[19px] leading-6 text-[#585858]">Stop Sketch</button>
      </div>
    </aside>
  );
}

/* ---------- navigation bar ---------- */

const Nav = ({ name, className = "", children }: { name: string; className?: string; children: ReactNode }) => (
  <button type="button" aria-label={name} className={className}>
    <Svg box="0 0 28 28" className="size-7">{children}</Svg>
  </button>
);

function NavBar() {
  return (
    <div className="flex gap-3 self-end">
      <div className="flex h-10 items-center bg-[#d3d3d3] pl-1 pr-[2px]">
        <Nav name="Orbit">
          <path d="M14 1v26M10 6l4-5 4 5M10 22l4 5 4-5" stroke="#666" strokeWidth="2" />
          <path d="M3 16c0-7 22-7 22 0 0 4-6 5-9 5" stroke="#777" strokeWidth="2" />
          <path d="M3 12v7h6M25 12v7h-4" stroke="#777" strokeWidth="2" />
        </Nav>
        <button type="button" aria-label="Orbit menu" className="ml-[6px]"><Caret /></button>
        <Nav name="Look at" className="ml-1">
          <path d="M4 9l5-7 3 5 5-4 6 6" stroke="#777" strokeWidth="1.500" />
          <path d="M3 10h22v16H3z" fill="#f4f4f6" />
          <rect x="6" y="13" width="16" height="8" rx="2" fill="#b2b6c6" stroke="#666" strokeWidth="2" />
        </Nav>
        <Nav name="Pan" className="ml-[14px]">
          <path d="M9 26l-6-9c-2-3 1-4 3-2l2 2V6c0-3 3-3 3 0v-3c0-3 4-3 4 0v3c0-3 3-3 4 0v4c1-3 4-2 4 0-1 8-1 11-4 16z" fill="#fcfcfc" stroke="#6a6a6a" strokeWidth="1.500" />
          <path d="M11 6v8M15 6v8M19 8v7" stroke="#8a8a8a" />
        </Nav>
        <Nav name="Zoom" className="ml-[14px]">
          <circle cx="11" cy="10" r="8.500" fill="#f5f7fa" stroke="#888" strokeWidth="2" />
          <path d="M17 17l8 9" stroke="#555" strokeWidth="4" />
          <path d="M22 3h6M25 0v6M22 10h6" stroke="#666" strokeWidth="1.500" />
        </Nav>
        <Nav name="Fit" className="ml-[14px]">
          <path d="M2 2h24v24H2z" stroke="#999" strokeDasharray="2 3" />
          <circle cx="12" cy="10" r="8.500" fill="#f2f5ee" stroke="#888" strokeWidth="2" />
          <path d="M17 17l8 9" stroke="#555" strokeWidth="4" />
        </Nav>
        <button type="button" aria-label="Zoom menu" className="ml-[6px]"><Caret /></button>
      </div>
      <div className="flex h-10 items-center bg-[#d3d3d3] pl-[3px] pr-[2px]">
        <Nav name="Display settings">
          <path d="M2 1h24v20H2z" fill="#f4f4f6" stroke="#888" />
          <path d="M5 4h18v14H5z" fill="#86ace0" />
          <path d="M26 2v19H3" stroke="#4d5b75" strokeWidth="2" />
          <path d="M11 21h7v3h3v3H8v-3h3z" fill="#eee" stroke="#777" />
        </Nav>
        <button type="button" aria-label="Display menu" className="ml-1"><Caret /></button>
        <Nav name="Grid settings" className="ml-1">
          <path d="M3 2h22v23H3z" fill="#f0f0f2" />
          <path d="M4 1v25M9 1v25M14 1v25M19 1v25M24 1v25M2 7h24M2 13h24M2 19h24M2 25h24" stroke="#777b86" strokeWidth="1.500" />
        </Nav>
        <button type="button" aria-label="Grid menu" className="ml-1"><Caret /></button>
        <Nav name="Viewports" className="ml-1">
          <path d="M2 3h24v22H2z" fill="#8fb2dd" />
          <path d="M15 3v22M2 14h24" stroke="#bcd2ee" strokeWidth="2" />
          <path d="M2 2v23h24" stroke="#46699c" strokeWidth="2" />
        </Nav>
        <button type="button" aria-label="Viewport menu" className="ml-1"><Caret /></button>
      </div>
    </div>
  );
}

/* ---------- timeline ---------- */

const timelineArt: Record<string, ReactNode> = {
  plane: <>
    <path d="M1 8l5-7h9v18l-5 6H1z" fill="#e8e8ea" stroke="#666" strokeWidth="1.500" />
    <path d="M9 7l6-6v18l-6 6z" fill="#8bb184" stroke="#587a54" />
    <path d="M18 8l7-6v16l-7 7z" fill="#e39a77" stroke="#b26a4c" />
  </>,
  sketch: <>
    <path d="M1 1h24v24H1z" fill="#e8eef6" stroke="#2e3238" strokeWidth="2" />
    <path d="M5 14h18v9H5z" fill="#c6dbef" />
    <path d="M6 6v15h15" stroke="#4a4f59" strokeWidth="3" />
    <path d="M10 14L21 1l5 2-11 14-6 2z" fill="#f5cf33" />
    <path d="M9 19l1-5 5 3z" fill="#3a2f18" />
  </>,
  loft: <>
    <path d="M1 1h24v14l-8 10H9L1 15z" fill="#a9c3e8" stroke="#55668a" strokeWidth="1.500" />
    <path d="M3 3h20v5H3z" fill="#cddcf2" />
    <circle cx="13" cy="19" r="5" fill="#eef2f8" stroke="#777f90" strokeWidth="1.500" />
  </>,
  body: <>
    <path d="M1 7l6-6h18v18l-5 6H1z" fill="#efeff1" stroke="#6e6e72" strokeWidth="1.500" />
    <path d="M20 7l5-6v18l-5 6z" fill="#b9b9c0" />
  </>,
  extrude: <>
    <path d="M1 7l5-6h11v18l-5 6H1z" fill="#9fc1e8" stroke="#5a6f8e" strokeWidth="1.500" />
    <path d="M12 7l5-6v18l-5 6z" fill="#6d93c4" />
    <path d="M23 24V6" stroke="#555" strokeWidth="1.500" />
    <path d="M23 1l-3 7h6z" fill="#444" />
  </>,
  move: <>
    <path d="M2 1h7v6H2zM2 9h7v7H2z" fill="#e8e8ea" stroke="#777" strokeWidth="1.500" />
    <path d="M6 16h10v9H6z" fill="#bfe0fa" stroke="#2f86cc" strokeWidth="2" />
    <path d="M19 20h6M22 17l-3 3 3 3" stroke="#333" strokeWidth="2" />
  </>,
  revolve: <>
    <path d="M2 6c5-6 17-6 22 0" stroke="#666" strokeWidth="2" />
    <path d="M3 10h20l2 6-3 8H4l-3-8z" fill="#8db1e0" stroke="#4c6894" strokeWidth="1.500" />
    <path d="M6 14h14v8H6z" fill="#c7d9f1" />
  </>,
  split: <>
    <path d="M1 7l6-6h18v18l-5 6H1z" fill="#aac6ea" stroke="#5f6b80" strokeWidth="1.500" />
    <path d="M1 18c5-8 9 4 13-2s6 0 11-4v7l-5 6H1z" fill="#dcdce2" stroke="#5f6b80" />
    <path d="M1 18c5-8 9 4 13-2s6 0 11-6" stroke="#cf3f3f" strokeWidth="2" />
  </>,
  pattern: <path d="M1 8h5v11H1zM11 8h5v11h-5zM20 8h5v11h-5z" fill="#b7cde9" stroke="#596f93" strokeWidth="1.500" />,
  pin: <>
    <path d="M13 20v6" stroke="#444" strokeWidth="2" />
    <path d="M7 1h12v4l-3 2v5c5 1 8 4 8 8H2c0-4 3-7 8-8V7L7 5z" fill="#d9775a" stroke="#9c4a30" strokeWidth="1.500" />
  </>,
  joint: <>
    <path d="M4 12l9-10 8 8v14l-6-6v-4l-4 1v6l-7 5z" fill="#b0b2ba" stroke="#666" strokeWidth="1.500" />
    <path d="M8 11l5-6v9l-5 6z" fill="#e4e4e9" />
  </>,
};

const features = [
  "plane", "plane", "plane", "sketch", "sketch", "sketch", "sketch", "loft", "loft", "loft", "plane", "sketch",
  "plane", "body", "extrude", "move", "sketch", "revolve", "split", "pattern", "pin", "joint", "sketch",
];

const bands = [
  "col-span-14 bg-[#d5f08e]", "col-span-1 bg-[#eea983]", "col-span-2 bg-[#d5f08e]", "col-span-3 bg-[#eea983]",
  "col-span-1 bg-[#d5f08e]", "col-span-1 bg-[#eea983]", "col-span-1 bg-[#d5f08e]",
];

const playback = [
  { name: "Go to start", d: "M2 2v22M20 2v22L5 13z" },
  { name: "Step back", d: "M19 6v14M15 2v22L2 13z" },
  { name: "Step forward", d: "M2 6v14M6 2v22l13-11z" },
  { name: "Play", d: "M2 1v24l17-12z" },
  { name: "Go to end", d: "M20 2v22M2 2v22l15-11z" },
];

function Timeline() {
  return (
    <footer className="flex h-[79px] bg-[#d2d2d2] text-[#4f4f4f]">
      <div className="ml-[14px] mt-5 flex gap-[18px] self-start">
        {playback.map((p) => (
          <button key={p.name} type="button" aria-label={p.name}>
            <Svg box="0 0 22 26" className="h-[26px] w-[22px]">
              <path d={p.d} fill="currentColor" stroke="currentColor" strokeWidth="2" />
            </Svg>
          </button>
        ))}
      </div>
      <div className="relative ml-[30px] mt-[9px] w-[883px]">
        <div className="grid grid-cols-[repeat(23,minmax(0,1fr))]">
          {bands.map((b, i) => <span key={i} className={`mx-[3px] h-[7px] ${b}`} />)}
        </div>
        <div className="mt-[6px] grid grid-cols-[repeat(23,minmax(0,1fr))]">
          {features.map((f, i) => (
            <button key={i} type="button" aria-label={`${f} ${i + 1}`} className="flex justify-center"><Small>{timelineArt[f]}</Small></button>
          ))}
        </div>
        <div className="mt-[6px] grid grid-cols-[repeat(23,minmax(0,1fr))]">
          {features.map((f, i) => (
            <span key={i} className="grid grid-cols-2">
              <span className={`h-[11px] border-r-2 border-[#858585] ${i > 0 ? "border-b-2" : ""}`} />
              <span className={`h-[11px] border-[#858585] ${i < 22 ? "border-b-2" : ""}`} />
            </span>
          ))}
        </div>
        <button type="button" aria-label="Expand group" className="absolute left-[738px] top-[43px] flex h-[18px] w-[18px] items-center justify-center rounded-[5px] border-2 border-[#8a8f9c] bg-[#dfe2ea]">
          <Svg box="0 0 10 10" className="size-[10px]"><path d="M5 0v10M0 5h10" stroke="#333" strokeWidth="2" /></Svg>
        </button>
        <svg aria-label="Timeline marker" viewBox="0 0 20 52" className="absolute left-[873px] top-[2px] h-[52px] w-5">
          <path d="M0 0h20v6l-7 7v39H8V13L0 6z" fill="#707070" />
        </svg>
      </div>
      <button type="button" aria-label="Timeline settings" className="ml-auto mr-[5px] mt-5 self-start">
        <Small>
          <path d="M13 0v26M0 13h26M4 4l18 18M22 4L4 22" stroke="#666" strokeWidth="4" />
          <circle cx="13" cy="13" r="10" fill="#666" />
          <circle cx="13" cy="13" r="6" fill="#d2d2d2" />
          <circle cx="13" cy="13" r="3" fill="#666" />
        </Small>
      </button>
    </footer>
  );
}

/* ---------- page ---------- */

export default function App() {
  return (
    <div className="bg-black font-['Open_Sans',sans-serif] text-lg leading-6 text-[#4a4a4a]">
      <Defs />
      <div className="flex min-h-screen flex-col overflow-hidden rounded-lg border-b-2 border-l-2 border-[#3d3d3d] bg-[#dedede]">
        <TitleBar />
        <QuickBar />
        <Tabs />
        <main className="relative flex flex-1 flex-col bg-[linear-gradient(90deg,#dedede_0,#d6d6d6_180px,#c8c8c8_420px,#c8c8c8_100%)]">
          <Scene />
          <form className="absolute left-[calc(50%-255px)] top-[527px] flex h-[35px] w-[162px] items-center bg-[#c9c6c2]/95 pl-[14px] shadow-[0_4px_8px_rgba(0,0,0,0.35)]">
            <input aria-label="Diameter" defaultValue="10.000 mm"
              className="h-[27px] w-[127px] border-[3px] border-[#8fb4e0] bg-[linear-gradient(90deg,#fff_9px,#b5d2f6_9px,#b5d2f6_109px,#fff_109px)] pl-[10px] text-[#222]" />
          </form>
          <div className="pointer-events-none relative flex flex-1 flex-col px-[6px] pb-2 pt-2 [&_button]:pointer-events-auto [&_label]:pointer-events-auto">
            <Ribbon />
            <div className="grid flex-1 grid-cols-[1fr_auto_1fr]">
              <section className="flex w-[664px] flex-col pt-[7px]">
                <PanelBar title="BROWSER" back />
                <Tree />
                <div className="flex-1" />
                <PanelBar title="COMMENTS" plus />
              </section>
              <NavBar />
              <div className="flex flex-col items-end justify-self-end pt-[38px]">
                <button type="button" className="mr-9 flex size-[85px] items-center justify-center border-2 border-[#d6d6d6] bg-[#dadada] text-[20px] text-[#8e9097] shadow-[0_0_4px_rgba(0,0,0,0.5)]">
                  <span className="flex size-14 items-center justify-center bg-[#d4d6da]">TOP</span>
                </button>
                <Palette />
              </div>
            </div>
          </div>
        </main>
        <Timeline />
      </div>
    </div>
  );
}
